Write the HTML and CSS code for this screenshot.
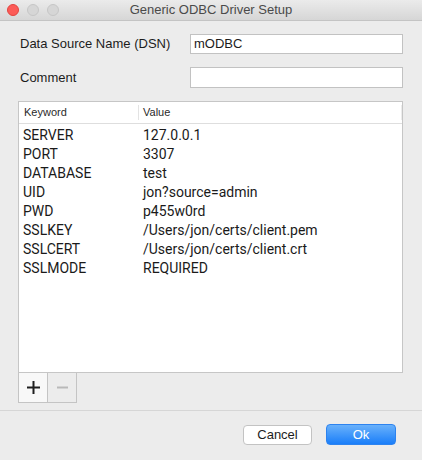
FILE: index.html
```html
<!DOCTYPE html>
<html>
<head>
<meta charset="utf-8">
<link rel="stylesheet" href="styles.css">
</head>
<body>
<div class="window">
  <div class="titlebar">
    <div class="lights">
      <span class="light close"></span>
      <span class="light"></span>
      <span class="light"></span>
    </div>
    <div class="title">Generic ODBC Driver Setup</div>
    <div></div>
  </div>
  <div class="content">
    <div class="form">
      <label class="label">Data Source Name (DSN)</label>
      <div class="input">mODBC</div>
      <label class="label">Comment</label>
      <div class="input tall"></div>
    </div>
    <div class="table">
      <div class="thead">
        <div class="th">Keyword</div>
        <div class="th value">Value</div>
      </div>
      <div class="tbody">
        <div class="tr"><span>SERVER</span><span>127.0.0.1</span></div>
        <div class="tr"><span>PORT</span><span>3307</span></div>
        <div class="tr"><span>DATABASE</span><span>test</span></div>
        <div class="tr"><span>UID</span><span>jon?source=admin</span></div>
        <div class="tr"><span>PWD</span><span>p455w0rd</span></div>
        <div class="tr"><span>SSLKEY</span><span>/Users/jon/certs/client.pem</span></div>
        <div class="tr"><span>SSLCERT</span><span>/Users/jon/certs/client.crt</span></div>
        <div class="tr"><span>SSLMODE</span><span>REQUIRED</span></div>
      </div>
    </div>
    <div class="tools">
      <button class="tool add" aria-label="Add">
        <svg width="13" height="13" viewBox="0 0 13 13"><rect x="0" y="5.5" width="13" height="2" fill="#1e1e1e"/><rect x="5.5" y="0" width="2" height="13" fill="#1e1e1e"/></svg>
      </button>
      <button class="tool remove" aria-label="Remove">
        <svg width="11" height="3" viewBox="0 0 11 3"><rect x="0" y="0.5" width="11" height="2" fill="#b9b9b9"/></svg>
      </button>
    </div>
  </div>
  <div class="footer">
    <button class="btn cancel">Cancel</button>
    <button class="btn ok">Ok</button>
  </div>
</div>
</body>
</html>
```

FILE: styles.css
```css
html, body {
  margin: 0;
  padding: 0;
}
body {
  background: #ececec;
  font-family: "Liberation Sans", Helvetica, Arial, sans-serif;
  font-size: 13px;
  color: #1c1c1c;
  width: 422px;
  height: 460px;
  overflow: hidden;
}
.window {
  display: flex;
  flex-direction: column;
  height: 460px;
}
.titlebar {
  height: 20px;
  border-bottom: 1px solid #c4c4c4;
  background: linear-gradient(#ebebeb, #d6d6d6);
  display: grid;
  grid-template-columns: 1fr auto 1fr;
  align-items: center;
}
.lights {
  display: flex;
  gap: 8px;
  padding-left: 7px;
}
.light {
  width: 12px;
  height: 12px;
  border-radius: 50%;
  box-sizing: border-box;
  background: #d6d6d6;
  border: 1px solid #c6c6c6;
}
.light.close {
  background: #fc5b57;
  border-color: #e2443f;
}
.title {
  color: #4a4a4a;
  font-size: 13px;
  line-height: 20px;
}
.content {
  padding: 13px 19px 0 18px;
}
.form {
  display: grid;
  grid-template-columns: 170px 1fr;
  grid-template-rows: 20px 21px;
  row-gap: 13px;
  padding-left: 2px;
  align-items: center;
}
.label {
  font-size: 13px;
  line-height: 16px;
}
.input {
  height: 20px;
  box-sizing: border-box;
  border: 1px solid #c2c2c2;
  background: #fff;
  padding-left: 3px;
  line-height: 18px;
  font-size: 13px;
}
.input.tall {
  height: 21px;
}
.table {
  margin-top: 13px;
  height: 272px;
  box-sizing: border-box;
  background: #fff;
  border: 1px solid #c6c6c6;
  display: flex;
  flex-direction: column;
}
.thead {
  height: 21px;
  border-bottom: 1px solid #dedede;
  display: grid;
  grid-template-columns: 119px 1fr;
  align-items: center;
  font-size: 11px;
  color: #2a2a2a;
}
.th {
  padding-left: 5px;
  line-height: 15px;
}
.th.value {
  border-left: 1px solid #e3e3e3;
  padding-left: 4px;
  border-right: 1px solid #ececec;
}
.tbody {
  padding-top: 2px;
  font-family: Roboto, "Liberation Sans", Arial, sans-serif;
}
.tr {
  display: grid;
  grid-template-columns: 120px 1fr;
  height: 19px;
  line-height: 19px;
  font-size: 14px;
  color: #1a1a1a;
}
.tr span:first-child {
  padding-left: 4px;
}
.tr span:last-child {
  padding-left: 4px;
}
.tools {
  display: flex;
}
.tool {
  width: 30px;
  height: 30px;
  box-sizing: border-box;
  border: 1px solid #c4c4c4;
  border-top: none;
  margin: 0;
  padding: 0;
  display: flex;
  align-items: center;
  justify-content: center;
}
.tool.add {
  background: #f8f8f8;
}
.tool.remove {
  background: #ececec;
  margin-left: -1px;
}
.footer {
  margin-top: 7px;
  border-top: 1px solid #d6d6d6;
  padding: 14px 26px 0 0;
  display: flex;
  justify-content: flex-end;
  gap: 14px;
}
.btn {
  height: 20px;
  box-sizing: border-box;
  border-radius: 4px;
  font-family: "Liberation Sans", Helvetica, Arial, sans-serif;
  font-size: 13px;
  padding: 0;
  line-height: 18px;
}
.btn.cancel {
  width: 69px;
  background: #fff;
  border: 1px solid #c3c3c3;
  color: #1c1c1c;
}
.btn.ok {
  width: 70px;
  margin-top: -1px;
  height: 21px;
  background: linear-gradient(#69b1fb, #1a7ef9);
  border: 1px solid #2d83ef;
  color: #fff;
}
```
